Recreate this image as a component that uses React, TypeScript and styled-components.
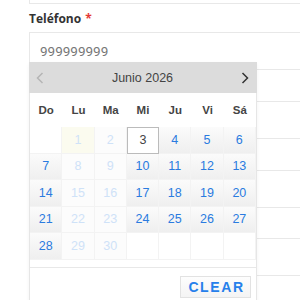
import React from "react";
import styled, { createGlobalStyle } from "styled-components";

const Global = createGlobalStyle`
  html, body { margin: 0; padding: 0; background: #fff; overflow: hidden; }
  body { width: 300px; height: 300px; }
`;

const Page = styled.div`
  position: relative;
  padding-left: 29px;
  width: 300px;
  height: 300px;
  box-sizing: border-box;
  overflow: hidden;
`;

const PrevInput = styled.div`
  height: 3px;
  border-left: 1px solid #e8e8e8;
  border-bottom: 1px solid #e8e8e8;
  width: 320px;
`;

const Field = styled.div`
  display: flex;
  flex-direction: column;
`;

const Label = styled.label<{ $h: number }>`
  height: ${(p) => p.$h}px;
  display: flex;
  align-items: center;
  font-family: "Open Sans", "Liberation Sans", sans-serif;
  font-weight: 700;
  font-size: 12px;
  color: #333;
`;

const Req = styled.span`
  color: #e53935;
  margin-left: 4px;
`;

const Input = styled.div`
  height: 38px;
  box-sizing: border-box;
  width: 320px;
  border: 1px solid #e8e8e8;
  padding-left: 10px;
  display: flex;
  align-items: center;
  font-family: Roboto, "Liberation Sans", sans-serif;
  font-size: 13.5px;
  color: #777;
`;

const Popup = styled.div`
  position: absolute;
  left: 29px;
  top: 62px;
  width: 228px;
  height: 250px;
  box-sizing: border-box;
  background: #fff;
  border-left: 1px solid #e6e6e6;
  border-right: 1px solid #e6e6e6;
  box-shadow: 0 2px 4px rgba(0, 0, 0, 0.05);
  display: flex;
  flex-direction: column;
  font-family: "Liberation Sans", Arial, sans-serif;
`;

const Header = styled.div`
  height: 31px;
  flex-shrink: 0;
  background: #dcdcdc;
  display: flex;
  align-items: center;
  justify-content: space-between;
  padding: 0 8px 0 7px;
  margin: 0 -1px;
  font-size: 12.5px;
  color: #444;
`;

const Grid = styled.div<{ $row: number }>`
  display: grid;
  grid-template-columns: repeat(7, 1fr);
  grid-auto-rows: ${(p) => p.$row}px;
  flex-shrink: 0;
`;

const DayName = styled.div`
  display: flex;
  align-items: center;
  justify-content: center;
  font-weight: 700;
  font-size: 11.5px;
  color: #444;
`;

type Kind = "empty" | "disabled" | "today" | "enabled" | "selected";

const Cell = styled.div<{ $kind: Kind }>`
  display: flex;
  align-items: center;
  justify-content: center;
  font-size: 12.5px;
  box-sizing: border-box;
  border-right: 1px solid #f3f3f3;
  border-bottom: 1px solid #f3f3f3;
  color: ${(p) =>
    p.$kind === "disabled" || p.$kind === "today"
      ? "#cfe2f8"
      : p.$kind === "selected"
      ? "#444"
      : "#2a7be0"};
  background: ${(p) =>
    p.$kind === "enabled"
      ? "linear-gradient(#fbfbfb, #efefef)"
      : p.$kind === "today"
      ? "#fbfbef"
      : p.$kind === "disabled"
      ? "#fcfcfc"
      : "#fff"};
  ${(p) => (p.$kind === "selected" ? "border: 1px solid #bbb;" : "")}
`;

const Footer = styled.div`
  margin-top: 7px;
  border-top: 1px solid #e8e8e8;
  display: flex;
  justify-content: flex-end;
  padding: 8px 5px 0 0;
`;

const ClearBtn = styled.button`
  width: 71px;
  height: 22px;
  border: 1px solid #e2e2e2;
  background: linear-gradient(#fdfdfd, #f4f4f4);
  color: #2680eb;
  font-family: "Liberation Sans", Arial, sans-serif;
  font-weight: 700;
  font-size: 14px;
  letter-spacing: 1.6px;
  padding: 0 0 0 2px;
  display: flex;
  align-items: center;
  justify-content: center;
`;

const Chevron = ({ dir, color }: { dir: "l" | "r"; color: string }) => (
  <svg width="8" height="12" viewBox="0 0 8 12">
    <polyline
      points={dir === "l" ? "6.5,1 1.5,6 6.5,11" : "1.5,1 6.5,6 1.5,11"}
      fill="none"
      stroke={color}
      strokeWidth="1.5"
    />
  </svg>
);

const days = ["Do", "Lu", "Ma", "Mi", "Ju", "Vi", "Sá"];

function kindFor(d: number | null): Kind {
  if (d === null) return "empty";
  if (d === 1) return "today";
  if (d === 3) return "selected";
  const col = d % 7; // June 2026 starts on Monday
  if (col === 1 || col === 2) return "disabled";
  return "enabled";
}

export default function App() {
  const cells: (number | null)[] = [null];
  for (let i = 1; i <= 30; i++) cells.push(i);
  while (cells.length < 35) cells.push(null);

  return (
    <>
      <Global />
      <Page>
        <PrevInput />
        <Field>
          <Label $h={28}>
            Teléfono<Req>*</Req>
          </Label>
          <Input>999999999</Input>
        </Field>
        <Field>
          <Label $h={31} />
          <Input />
        </Field>
        <Field>
          <Label $h={31} />
          <Input />
        </Field>
        <Field>
          <Label $h={30} />
          <Input />
        </Field>
        <Popup>
          <Header>
            <Chevron dir="l" color="#b5b5b5" />
            <span>Junio 2026</span>
            <Chevron dir="r" color="#333" />
          </Header>
          <Grid $row={34}>
            {days.map((d) => (
              <DayName key={d}>{d}</DayName>
            ))}
          </Grid>
          <Grid $row={26.5}>
            {cells.map((d, i) => (
              <Cell key={i} $kind={kindFor(d)}>
                {d ?? ""}
              </Cell>
            ))}
          </Grid>
          <Footer>
            <ClearBtn>CLEAR</ClearBtn>
          </Footer>
        </Popup>
      </Page>
    </>
  );
}
